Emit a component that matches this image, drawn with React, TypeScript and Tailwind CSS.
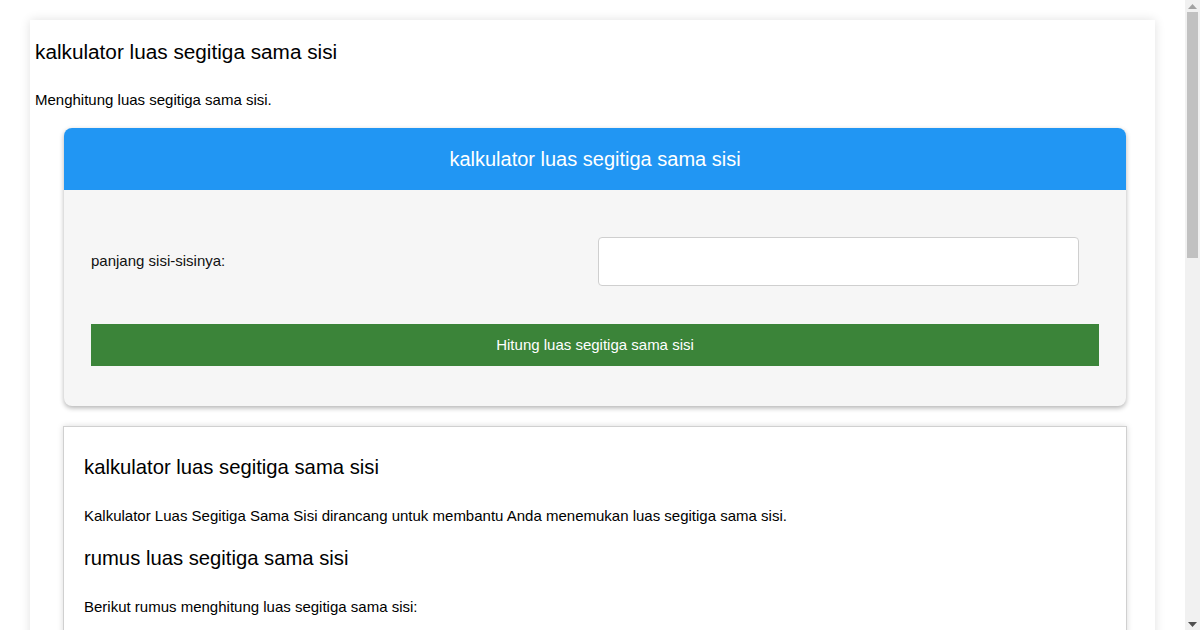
import React from "react";

function Scrollbar() {
  return (
    <div className="w-[15px] h-[630px] shrink-0 bg-[#f1f1f1] flex flex-col items-center">
      <div className="h-[12px] w-full flex items-center justify-center">
        <svg width="9" height="5" viewBox="0 0 9 5"><polygon points="0,5 9,5 4.5,0" fill="#a3a3a3" /></svg>
      </div>
      <div className="w-[11px] h-[246px] bg-[#c1c1c1] ml-[2px] self-start" />
      <div className="flex-1" />
      <div className="h-[12px] w-full flex items-center justify-center">
        <svg width="9" height="5" viewBox="0 0 9 5"><polygon points="0,0 9,0 4.5,5" fill="#505050" /></svg>
      </div>
    </div>
  );
}

export default function App() {
  return (
    <div className="flex h-[630px] overflow-hidden bg-white text-black" style={{ fontFamily: '"Liberation Sans", Arial, sans-serif' }}>
      <div className="w-[1185px] h-[630px] overflow-hidden shrink-0">
        <div className="pt-[20px] pb-[20px]">
          <div className="mx-[30px] px-[5px] pt-[20px] pb-[40px] bg-white shadow-[0_0_10px_rgba(0,0,0,0.12)]">
            <h1 className="text-[20.75px] leading-[23px] font-normal">kalkulator luas segitiga sama sisi</h1>
            <p className="mt-[28px] text-[15px] leading-[17px]">Menghitung luas segitiga sama sisi.</p>

            <div className="mt-[20px] ml-[29px] w-[1062px] rounded-[8px] overflow-hidden bg-[#f6f6f6] shadow-[0_2px_5px_rgba(0,0,0,0.3)]">
              <div className="h-[62px] bg-[#2196f3] flex items-center justify-center text-white text-[20px]">
                kalkulator luas segitiga sama sisi
              </div>
              <div className="px-[27px] pt-[47px] pb-[40px]">
                <div className="flex items-center">
                  <label className="w-[507px] text-[15px] text-[#111]">panjang sisi-sisinya:</label>
                  <input type="text" className="w-[481px] h-[49px] bg-white border border-[#cfcfcf] rounded-[4px] outline-none" />
                </div>
                <button className="mt-[38px] w-[1008px] h-[42px] bg-[#3b8439] text-white text-[15px] flex items-center justify-center">
                  Hitung luas segitiga sama sisi
                </button>
              </div>
            </div>

            <div className="mt-[20px] ml-[28px] w-[1064px] h-[400px] border border-[#d0d0d0] bg-white px-[20px] pt-[29px] pb-[30px] shadow-[0_0_6px_rgba(0,0,0,0.15)]">
              <h2 className="text-[20.25px] leading-[23px] font-normal">kalkulator luas segitiga sama sisi</h2>
              <p className="mt-[28px] text-[15px] leading-[17px]">Kalkulator Luas Segitiga Sama Sisi dirancang untuk membantu Anda menemukan luas segitiga sama sisi.</p>
              <h3 className="mt-[22px] text-[20.25px] leading-[24px] font-normal">rumus luas segitiga sama sisi</h3>
              <p className="mt-[28px] text-[15px] leading-[17px]">Berikut rumus menghitung luas segitiga sama sisi:</p>
            </div>
          </div>
        </div>
      </div>
      <Scrollbar />
    </div>
  );
}
